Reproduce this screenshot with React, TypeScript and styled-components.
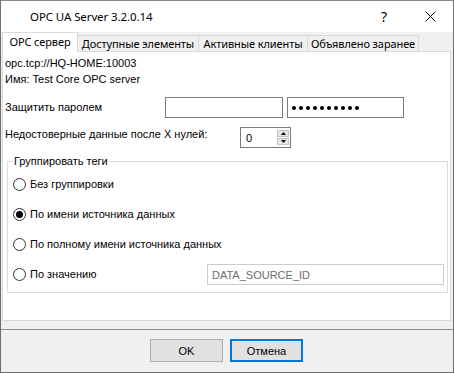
import React, { useState } from 'react'
import styled, { createGlobalStyle } from 'styled-components'

const GlobalStyle = createGlobalStyle`
  html, body {
    margin: 0;
    padding: 0;
    background: #ffffff;
  }
  * {
    box-sizing: border-box;
  }
`

const Window = styled.div`
  width: 454px;
  height: 373px;
  display: flex;
  flex-direction: column;
  border: 1px solid #6e6e6e;
  border-top-color: #8a8a8a;
  background: #f0f0f0;
  font-family: 'Liberation Sans', Arial, sans-serif;
  font-size: 11px;
  color: #000;
  overflow: hidden;
`

const TitleBar = styled.div`
  height: 31px;
  flex: none;
  background: #ffffff;
  display: flex;
  align-items: center;
  padding-left: 29px;
`

const Title = styled.div`
  flex: 1;
  font-family: 'Noto Sans', 'Open Sans', sans-serif;
  font-size: 11.5px;
  letter-spacing: -0.1px;
  padding-bottom: 1px;
`

const TitleButton = styled.div`
  width: 46px;
  height: 31px;
  display: flex;
  align-items: center;
  justify-content: center;
  font-family: 'Noto Sans', sans-serif;
  font-size: 14px;
`

const Client = styled.div`
  flex: 1;
  display: flex;
  flex-direction: column;
  padding: 0 2px 0 1px;
`

const TabStrip = styled.div`
  height: 20px;
  flex: none;
  display: flex;
  align-items: flex-end;
  position: relative;
  z-index: 1;
  margin-bottom: -1px;
`

const Tab = styled.div<{ $active?: boolean; $w: number }>`
  width: ${(p) => p.$w}px;
  height: ${(p) => (p.$active ? 20 : 17)}px;
  display: flex;
  align-items: center;
  justify-content: center;
  background: ${(p) => (p.$active ? '#ffffff' : '#f0f0f0')};
  border: 1px solid #d9d9d9;
  border-bottom: ${(p) => (p.$active ? 'none' : '1px solid #d9d9d9')};
  margin-left: ${(p) => (p.$active ? 0 : -1)}px;
  font-family: 'Noto Sans', 'Open Sans', sans-serif;
  font-size: 11px;
  letter-spacing: -0.1px;
  padding-bottom: ${(p) => (p.$active ? 2 : 0)}px;
  white-space: nowrap;
`

const Panel = styled.div`
  height: 270px;
  flex: none;
  background: #ffffff;
  border: 1px solid #d9d9d9;
  display: flex;
  flex-direction: column;
  padding: 0 1px 0 2px;
`

const InfoLine = styled.div<{ $top: number }>`
  line-height: 13px;
  margin-top: ${(p) => p.$top}px;
`

const FormRow = styled.div<{ $top: number }>`
  display: flex;
  align-items: center;
  margin-top: ${(p) => p.$top}px;
  height: 21px;
`

const RowLabel = styled.div<{ $w: number; $lift?: number }>`
  width: ${(p) => p.$w}px;
  flex: none;
  line-height: 13px;
  transform: translateY(${(p) => -(p.$lift || 0)}px);
`

const TextBox = styled.div<{ $w: number; $disabled?: boolean }>`
  width: ${(p) => p.$w}px;
  height: 21px;
  flex: none;
  border: 1px solid ${(p) => (p.$disabled ? '#cccccc' : '#7a7a7a')};
  background: #ffffff;
  display: flex;
  align-items: center;
  padding-left: 4px;
  color: ${(p) => (p.$disabled ? '#6d6d6d' : '#000')};
`

const Dots = styled.div`
  display: flex;
  gap: 3px;
`

const Dot = styled.span`
  width: 4px;
  height: 4px;
  border-radius: 50%;
  background: #000;
`

const SpinBox = styled.div`
  width: 51px;
  height: 21px;
  border: 1px solid #7a7a7a;
  display: flex;
  align-items: center;
  justify-content: space-between;
  padding: 0 1px 0 5px;
`

const SpinButtons = styled.div`
  display: flex;
  flex-direction: column;
  gap: 1px;
`

const SpinButton = styled.div`
  width: 12px;
  height: 7px;
  background: #e5e5e5;
  border: 1px solid #c4c4c4;
  display: flex;
  align-items: center;
  justify-content: center;
`

const GroupBox = styled.fieldset`
  margin: 7px 1px 0 2px;
  padding: 0 0 7px 0;
  border: 1px solid #dcdcdc;
  display: flex;
  flex-direction: column;
  gap: 9px;
  min-width: 0;
`

const Legend = styled.legend`
  margin-left: 5px;
  padding: 0 1px;
  line-height: 13px;
  margin-bottom: 6px;
`

const RadioRow = styled.label`
  display: flex;
  align-items: center;
  height: 21px;
  padding-left: 5px;
  cursor: default;
`

const RadioCircle = styled.span<{ $checked: boolean }>`
  width: 13px;
  height: 13px;
  flex: none;
  border-radius: 50%;
  border: 1px solid #333333;
  background: #ffffff;
  display: flex;
  align-items: center;
  justify-content: center;
  margin-right: 4px;
  &::after {
    content: '';
    width: 7px;
    height: 7px;
    border-radius: 50%;
    background: ${(p) => (p.$checked ? '#000' : 'transparent')};
  }
`

const RadioText = styled.span<{ $w?: number }>`
  width: ${(p) => (p.$w ? `${p.$w}px` : 'auto')};
  flex: none;
  line-height: 13px;
`

const Footer = styled.div`
  flex: 1;
  margin-top: 8px;
  border-top: 1px solid #8c8c8c;
  margin-left: -1px;
  margin-right: -2px;
  display: flex;
  justify-content: center;
  padding-top: 9px;
  gap: 7px;
  padding-right: 1px;
`

const DialogButton = styled.div<{ $default?: boolean }>`
  width: 73px;
  height: 23px;
  background: #e1e1e1;
  border: ${(p) => (p.$default ? '2px solid #0078d7' : '1px solid #adadad')};
  display: flex;
  align-items: center;
  justify-content: center;
`

const tabs = [
  { label: 'OPC сервер', w: 76 },
  { label: 'Доступные элементы', w: 122 },
  { label: 'Активные клиенты', w: 110 },
  { label: 'Объявлено заранее', w: 112 },
]

const options = [
  'Без группировки',
  'По имени источника данных',
  'По полному имени источника данных',
  'По значению',
]

const App = () => {
  const [group, setGroup] = useState(1)

  return (
    <>
      <GlobalStyle />
      <Window>
        <TitleBar>
          <Title>OPC UA Server 3.2.0.14</Title>
          <TitleButton>?</TitleButton>
          <TitleButton>
            <svg width="11" height="11" viewBox="0 0 11 11">
              <path d="M0.5 0.5 L10.5 10.5 M10.5 0.5 L0.5 10.5" stroke="#000" strokeWidth="1" />
            </svg>
          </TitleButton>
        </TitleBar>
        <Client>
          <TabStrip>
            {tabs.map((t, i) => (
              <Tab key={t.label} $active={i === 0} $w={t.w}>
                {t.label}
              </Tab>
            ))}
          </TabStrip>
          <Panel>
            <InfoLine $top={5}>opc.tcp://HQ-HOME:10003</InfoLine>
            <InfoLine $top={3}>Имя: Test Core OPC server</InfoLine>
            <FormRow $top={11}>
              <RowLabel $w={160}>Защитить паролем</RowLabel>
              <TextBox $w={118} />
              <TextBox $w={117} style={{ marginLeft: 4 }}>
                <Dots>
                  {Array.from({ length: 10 }).map((_, i) => (
                    <Dot key={i} />
                  ))}
                </Dots>
              </TextBox>
            </FormRow>
            <FormRow $top={9}>
              <RowLabel $w={235} $lift={3}>
                Недостоверные данные после X нулей:
              </RowLabel>
              <SpinBox>
                <span>0</span>
                <SpinButtons>
                  <SpinButton>
                    <svg width="5" height="3" viewBox="0 0 5 3">
                      <path d="M2.5 0 L5 3 L0 3 Z" fill="#000" />
                    </svg>
                  </SpinButton>
                  <SpinButton>
                    <svg width="5" height="3" viewBox="0 0 5 3">
                      <path d="M0 0 L5 0 L2.5 3 Z" fill="#000" />
                    </svg>
                  </SpinButton>
                </SpinButtons>
              </SpinBox>
            </FormRow>
            <GroupBox>
              <Legend>Группировать теги</Legend>
              {options.map((o, i) => (
                <RadioRow key={o} onClick={() => setGroup(i)}>
                  <RadioCircle $checked={group === i} />
                  <RadioText $w={i === 3 ? 177 : undefined}>{o}</RadioText>
                  {i === 3 && <TextBox $w={237} $disabled>DATA_SOURCE_ID</TextBox>}
                </RadioRow>
              ))}
            </GroupBox>
          </Panel>
          <Footer>
            <DialogButton>OK</DialogButton>
            <DialogButton $default>Отмена</DialogButton>
          </Footer>
        </Client>
      </Window>
    </>
  )
}

export default App
